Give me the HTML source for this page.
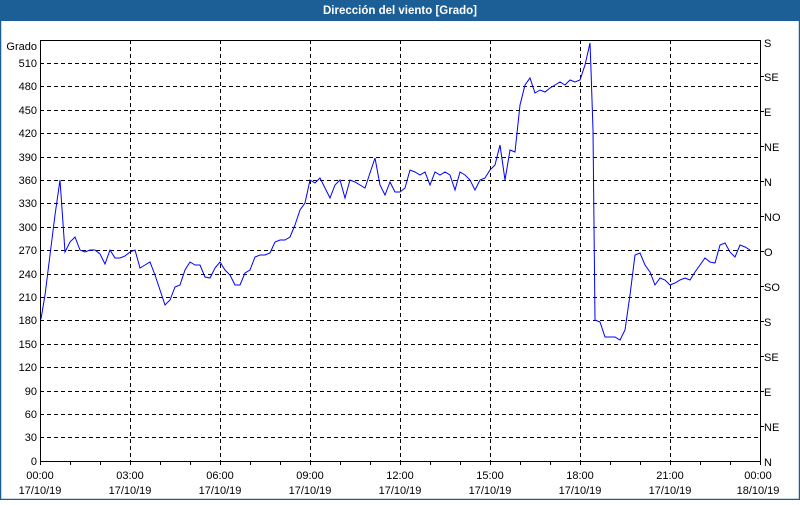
<!DOCTYPE html>
<html><head><meta charset="utf-8"><style>
html,body{margin:0;padding:0;background:#fff}
body{width:800px;height:500px;overflow:hidden}
</style></head><body>
<svg width="800" height="500" xmlns="http://www.w3.org/2000/svg" font-family="Liberation Sans, sans-serif" font-size="11">
<rect x="0" y="0" width="800" height="500" fill="#fff"/>
<rect x="0.5" y="0.5" width="799" height="499" fill="none" stroke="#1c5e96" stroke-width="1.5"/>
<rect x="0" y="0" width="800" height="21" fill="#1c5e96"/>
<text x="400" y="14" fill="#fff" font-weight="bold" font-size="11.5" text-anchor="middle">Dirección del viento [Grado]</text>
<g stroke="#000" stroke-width="1" stroke-dasharray="4,3" shape-rendering="crispEdges">
<line x1="40" x2="760" y1="63.5" y2="63.5"/><line x1="40" x2="760" y1="86.5" y2="86.5"/><line x1="40" x2="760" y1="110.5" y2="110.5"/><line x1="40" x2="760" y1="133.5" y2="133.5"/><line x1="40" x2="760" y1="157.5" y2="157.5"/><line x1="40" x2="760" y1="180.5" y2="180.5"/><line x1="40" x2="760" y1="203.5" y2="203.5"/><line x1="40" x2="760" y1="227.5" y2="227.5"/><line x1="40" x2="760" y1="250.5" y2="250.5"/><line x1="40" x2="760" y1="274.5" y2="274.5"/><line x1="40" x2="760" y1="297.5" y2="297.5"/><line x1="40" x2="760" y1="320.5" y2="320.5"/><line x1="40" x2="760" y1="344.5" y2="344.5"/><line x1="40" x2="760" y1="367.5" y2="367.5"/><line x1="40" x2="760" y1="391.5" y2="391.5"/><line x1="40" x2="760" y1="414.5" y2="414.5"/><line x1="40" x2="760" y1="437.5" y2="437.5"/>
<line y1="40" y2="461" x1="130.5" x2="130.5"/><line y1="40" y2="461" x1="220.5" x2="220.5"/><line y1="40" y2="461" x1="310.5" x2="310.5"/><line y1="40" y2="461" x1="400.5" x2="400.5"/><line y1="40" y2="461" x1="490.5" x2="490.5"/><line y1="40" y2="461" x1="580.5" x2="580.5"/><line y1="40" y2="461" x1="670.5" x2="670.5"/>
</g>
<g stroke="#000" stroke-width="1" shape-rendering="crispEdges" fill="none">
<path d="M40.5 40.5H760.5M40.5 40V461.5H760.5M760.5 40V462"/>
<path d="M70.5 461v4M100.5 461v4M130.5 461v4M160.5 461v4M190.5 461v4M220.5 461v4M250.5 461v4M280.5 461v4M310.5 461v4M340.5 461v4M370.5 461v4M400.5 461v4M430.5 461v4M460.5 461v4M490.5 461v4M520.5 461v4M550.5 461v4M580.5 461v4M610.5 461v4M640.5 461v4M670.5 461v4M700.5 461v4M730.5 461v4M760.5 461v4M40.5 461v4"/>
<path d="M760 76.5h4M760 111.5h4M760 146.5h4M760 181.5h4M760 216.5h4M760 251.5h4M760 286.5h4M760 321.5h4M760 356.5h4M760 391.5h4M760 426.5h4"/>
</g>
<g fill="#000" text-anchor="end">
<text x="37" y="50">Grado</text>
<text x="37" y="67">510</text><text x="37" y="90">480</text><text x="37" y="114">450</text><text x="37" y="137">420</text><text x="37" y="161">390</text><text x="37" y="184">360</text><text x="37" y="207">330</text><text x="37" y="231">300</text><text x="37" y="254">270</text><text x="37" y="278">240</text><text x="37" y="301">210</text><text x="37" y="324">180</text><text x="37" y="348">150</text><text x="37" y="371">120</text><text x="37" y="395">90</text><text x="37" y="418">60</text><text x="37" y="441">30</text><text x="37" y="465">0</text>
</g>
<g fill="#000">
<text x="764" y="47">S</text><text x="764" y="81">SE</text><text x="764" y="116">E</text><text x="764" y="151">NE</text><text x="764" y="186">N</text><text x="764" y="221">NO</text><text x="764" y="256">O</text><text x="764" y="291">SO</text><text x="764" y="326">S</text><text x="764" y="361">SE</text><text x="764" y="396">E</text><text x="764" y="431">NE</text><text x="764" y="466">N</text>
</g>
<g fill="#000" text-anchor="middle">
<text x="40" y="479">00:00</text><text x="40" y="494">17/10/19</text>
<text x="130" y="479">03:00</text><text x="130" y="494">17/10/19</text>
<text x="220" y="479">06:00</text><text x="220" y="494">17/10/19</text>
<text x="310" y="479">09:00</text><text x="310" y="494">17/10/19</text>
<text x="400" y="479">12:00</text><text x="400" y="494">17/10/19</text>
<text x="490" y="479">15:00</text><text x="490" y="494">17/10/19</text>
<text x="580" y="479">18:00</text><text x="580" y="494">17/10/19</text>
<text x="670" y="479">21:00</text><text x="670" y="494">17/10/19</text>
<text x="758" y="479">00:00</text><text x="758" y="494">18/10/19</text>
</g>
<polyline fill="none" stroke="#0000ff" stroke-width="1" points="41,319 45,295 50,255 55,215 60,180 65,252 70,242 75,237 80,250 85,252 90,250 95,250 100,254 105,264 110,250 115,258 120,258 125,256 130,252 135,250 140,268 145,265 150,262 155,275 160,290 165,305 170,300 175,287 180,285 185,270 190,262 195,265 200,265 205,277 210,278 215,268 220,262 225,270 230,275 235,285 240,285 245,273 250,270 255,257 260,255 265,255 270,253 275,242 280,240 285,240 290,237 295,225 300,210 305,203 310,180 315,183 320,178 325,188 330,198 335,185 340,180 345,198 350,180 355,182 360,185 365,188 370,173 375,158 380,185 385,195 390,182 395,192 400,192 405,188 410,170 415,172 420,175 425,172 430,185 435,172 440,175 445,172 450,175 455,190 460,172 465,175 470,180 475,190 480,180 485,178 490,170 495,165 500,145 505,180 510,150 515,152 520,105 525,85 530,78 535,93 540,90 545,92 550,88 555,85 560,82 565,85 570,80 575,82 580,80 585,65 590,43 591,70 593,130 595,320 600,322 605,337 610,337 615,337 620,340 625,330 630,295 635,255 640,253 645,265 650,272 655,285 660,278 665,280 670,285 675,283 680,280 685,278 690,280 695,272 700,265 705,258 710,262 715,263 720,245 725,243 730,252 735,257 740,245 745,247 750,250"/>
</svg>
</body></html>
